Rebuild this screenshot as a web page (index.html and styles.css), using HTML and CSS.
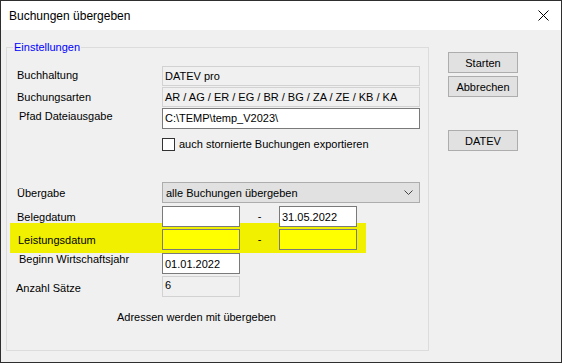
FILE: index.html
```html
<html>
	<head>
		<title>Buchungen übergeben</title>
		<link rel="stylesheet" href="styles.css">
	</head>
	<body>
		<div class="window">
			<div class="titlebar">
				<span class="title">Buchungen übergeben</span>
				<svg class="close" width="11" height="11" viewBox="0 0 11 11">
					<path d="M0.5 0.5 L10.5 10.5 M10.5 0.5 L0.5 10.5" stroke="#000" stroke-width="1" fill="none" />
				</svg>
			</div>
			<div class="client">
				<fieldset class="group">
					<legend>Einstellungen</legend>
					<div class="rows">
						<div class="row row-buchhaltung">
							<span class="lbl">Buchhaltung</span>
							<div class="field readonly wide">DATEV pro</div>
						</div>
						<div class="row row-arten">
							<span class="lbl">Buchungsarten</span>
							<div class="field readonly wide">AR / AG / ER / EG / BR / BG / ZA / ZE / KB / KA</div>
						</div>
						<div class="row row-pfad">
							<span class="lbl">Pfad Dateiausgabe</span>
							<div class="field edit wide">C:\TEMP\temp_V2023\</div>
						</div>
						<div class="row row-check">
							<span class="box"></span>
							<span class="check-text">auch stornierte Buchungen exportieren</span>
						</div>
						<div class="row row-uebergabe">
							<span class="lbl">Übergabe</span>
							<div class="combo">
								<span>alle Buchungen übergeben</span>
								<svg width="9" height="5" viewBox="0 0 9 5">
									<path d="M0.5 0.5 L4.5 4.5 L8.5 0.5" stroke="#444" stroke-width="1" fill="none" />
								</svg>
							</div>
						</div>
						<div class="row row-beleg">
							<span class="lbl">Belegdatum</span>
							<div class="field edit date"></div>
							<span class="dash">-</span>
							<div class="field edit date">31.05.2022</div>
						</div>
						<div class="row row-leistung">
							<span class="lbl">Leistungsdatum</span>
							<div class="field marked date"></div>
							<span class="dash">-</span>
							<div class="field marked date"></div>
						</div>
						<div class="row row-beginn">
							<span class="lbl">Beginn Wirtschaftsjahr</span>
							<div class="field edit date">01.01.2022</div>
						</div>
						<div class="row row-anzahl">
							<span class="lbl">Anzahl Sätze</span>
							<div class="field readonly date count">6</div>
						</div>
						<p class="note">Adressen werden mit übergeben</p>
					</div>
				</fieldset>
				<div class="buttons">
					<button class="btn">Starten</button>
					<button class="btn">Abbrechen</button>
					<button class="btn btn-datev">DATEV</button>
				</div>
			</div>
		</div>
	</body>
</html>
```

FILE: styles.css
```css
* {
	box-sizing: border-box;
}
body {
	margin: 0;
	font: 11px "Liberation Sans", Arial, sans-serif;
	color: #000;
}
.window {
	width: 562px;
	height: 363px;
	border: 1px solid #2e2e2e;
	background: #f0f0f0;
	display: flex;
	flex-direction: column;
}
.titlebar {
	height: 29px;
	flex: none;
	background: #fff;
	display: flex;
	align-items: center;
	justify-content: space-between;
	padding: 0 12px 0 8px;
	font-size: 12px;
}
.close {
	display: block;
}
.client {
	flex: 1;
	display: flex;
	align-items: flex-start;
	padding: 11px 0 0 5px;
}
.group {
	width: 423px;
	height: 310px;
	margin: 0;
	padding: 0;
	border: 1px solid #dcdcdc;
	flex: none;
}
.group legend {
	margin-left: 6px;
	padding: 0 1px;
	line-height: 13px;
	color: #0000ff;
}
.rows {
	padding: 12px 0 0 10px;
}
.row {
	display: flex;
	align-items: flex-start;
}
.lbl {
	width: 145px;
	flex: none;
	line-height: 13px;
	white-space: nowrap;
}
.field {
	height: 20px;
	border: 1px solid;
	padding: 0 2px;
	line-height: 18px;
	white-space: nowrap;
}
.readonly {
	background: #f0f0f0;
	border-color: #d2d2d2;
}
.edit {
	background: #fff;
	border-color: #7a7a7a;
	position: relative;
}
.marked {
	background: #ffff00;
	border-color: #7a7a7a;
}
.wide {
	width: 258px;
}
.date {
	width: 78px;
	height: 21px;
	line-height: 20px;
}
.dash {
	width: 39px;
	text-align: center;
	line-height: 20px;
}
.row-buchhaltung {
	height: 21px;
}
.row-buchhaltung .lbl {
	padding-top: 3px;
}
.row-arten {
	height: 21px;
}
.row-arten .lbl {
	padding-top: 4px;
}
.row-pfad {
	height: 30px;
}
.row-pfad .field {
	height: 21px;
}
.row-pfad .lbl {
	padding: 2px 0 0 2px;
}
.row-check {
	height: 44px;
	padding-left: 145px;
}
.box {
	width: 13px;
	height: 13px;
	border: 1px solid #333;
	background: #fff;
	flex: none;
}
.check-text {
	margin-left: 4px;
	line-height: 13px;
}
.row-uebergabe {
	height: 24px;
}
.row-uebergabe .lbl {
	padding-top: 5px;
}
.combo {
	width: 258px;
	height: 21px;
	border: 1px solid #adadad;
	background: #e1e1e1;
	display: flex;
	align-items: center;
	justify-content: space-between;
	padding: 0 6px 0 3px;
}
.combo svg {
	display: block;
}
.row-beleg {
	height: 17px;
}
.row-beleg .lbl {
	padding-top: 5px;
}
.row-leistung {
	height: 30px;
	margin-left: -7px;
	width: 356px;
	padding: 6px 0 0 7px;
	background: #f0f000;
}
.row-leistung .lbl {
	padding: 5px 0 0 1px;
}
.row-beginn {
	height: 23px;
}
.row-beginn .lbl {
	padding-left: 2px;
}
.row-anzahl {
	height: 20px;
}
.row-anzahl .lbl {
	padding-top: 6px;
	margin-left: -1px;
	margin-right: 1px;
}
.count {
	line-height: 16px;
}
.note {
	margin: 15px 0 0 100px;
	line-height: 13px;
}
.buttons {
	margin: 11px 0 0 19px;
	display: flex;
	flex-direction: column;
}
.btn {
	width: 70px;
	height: 21px;
	margin: 0 0 3px;
	padding: 0;
	border: 1px solid #adadad;
	background: #e1e1e1;
	font: 11px "Liberation Sans", Arial, sans-serif;
	color: #000;
}
.btn-datev {
	margin-top: 30px;
}
```
